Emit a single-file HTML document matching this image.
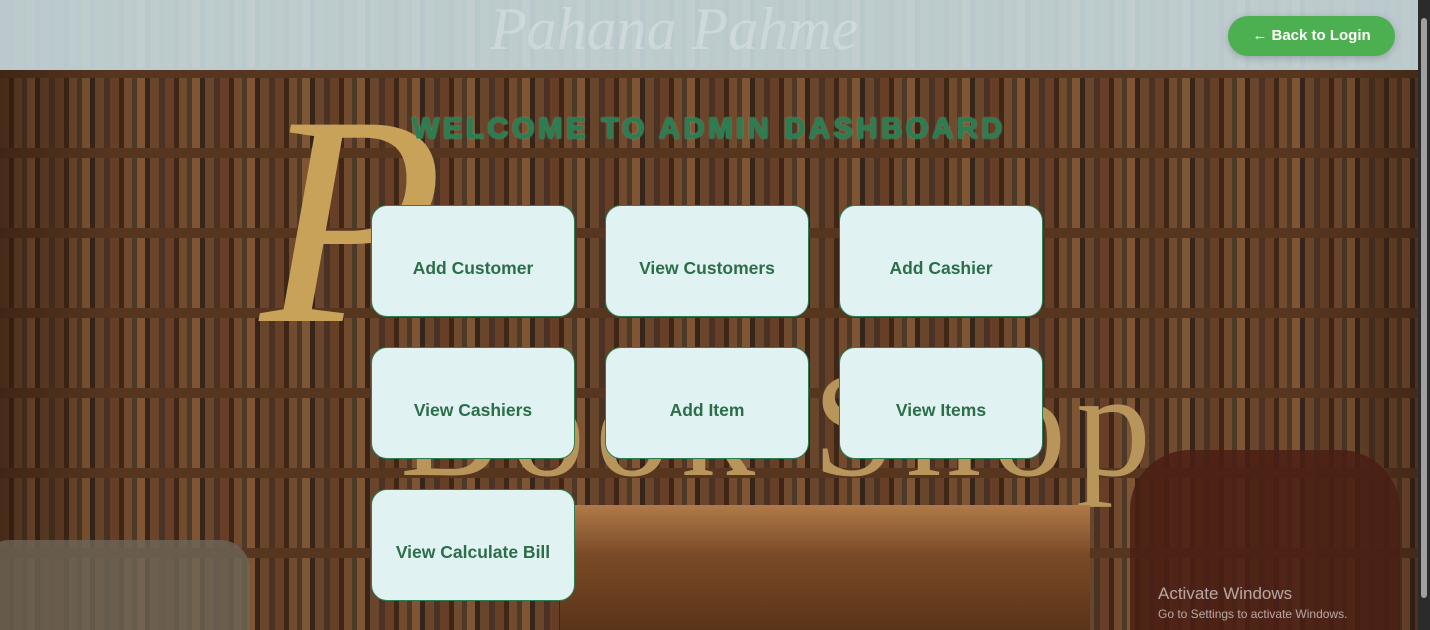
<!DOCTYPE html>
<html><head><meta charset="utf-8"><style>
html,body{margin:0;padding:0;width:1430px;height:630px;overflow:hidden;font-family:"Liberation Sans",sans-serif}
.bg{position:absolute;left:0;top:0;width:1418px;height:630px;background:#4a2e1c;overflow:hidden}
.books{position:absolute;left:0;right:0;top:0;bottom:0;
background:
repeating-linear-gradient(180deg,transparent 0 70px,#5a3820 70px 80px),
repeating-linear-gradient(90deg,#6b4328 0 9px,#3d2617 9px 14px,#7a5032 14px 22px,#4d3b2a 22px 27px,#8a5c38 27px 35px,#33241a 35px 40px,#6e4a2e 40px 49px,#4a3526 49px 55px);
background-position:0 -2px,0 0;opacity:.85}
.shade{position:absolute;left:0;right:0;top:0;bottom:0;background:linear-gradient(90deg,rgba(40,22,12,.5) 0,rgba(0,0,0,0) 8%,rgba(0,0,0,0) 92%,rgba(40,22,12,.4));}
.desk{position:absolute;left:560px;top:505px;width:530px;height:125px;background:linear-gradient(#b07a48,#7a4a28 40%,#5a3418)}
.chair{position:absolute;left:1130px;top:450px;width:270px;height:180px;background:#4a1e14;border-radius:60px 60px 0 0;opacity:.85}
.chairl{position:absolute;left:-20px;top:540px;width:270px;height:90px;background:#6e6658;border-radius:30px 30px 0 0;opacity:.8}
.script{position:absolute;font-family:"Liberation Serif",serif;font-style:italic;color:#c9a25a;font-size:300px;left:260px;top:70px;line-height:1}
.script2{position:absolute;font-family:"Liberation Serif",serif;color:#b8955a;font-size:150px;left:400px;top:350px;line-height:1;letter-spacing:10px}
.header{position:absolute;left:0;top:0;width:1418px;height:70px;background:rgba(200,218,224,.9)}
.ghost{position:absolute;left:490px;top:-5px;font-family:"Liberation Serif",serif;font-style:italic;font-size:60px;color:rgba(255,255,255,.25)}
.back{position:absolute;left:1228px;top:16px;width:167px;height:40px;border-radius:20px;background:#4caf50;color:#fff;font-weight:bold;font-size:15px;line-height:40px;text-align:center;box-shadow:0 2px 8px rgba(0,0,0,.2)}
.title{position:absolute;left:0;width:1418px;text-align:center;top:113px;font-size:29px;font-weight:900;letter-spacing:3.7px;color:#2e7d52;-webkit-text-stroke:1.2px #2e7d52;text-shadow:0 0 2px rgba(160,220,180,.8)}
.card{position:absolute;width:204px;height:112px;border:1.5px solid #2e7d52;border-radius:16px;background:#e0f2f1;color:#2c6e49;font-weight:bold;font-size:17.5px;display:flex;align-items:center;justify-content:center;box-sizing:border-box;padding-top:14px}
.sb{position:absolute;left:1418px;top:0;width:12px;height:630px;background:#2b2b2b}
.sb i{position:absolute;left:3px;top:18px;width:6px;height:580px;background:#a0a0a0;border-radius:3px}
.win{position:absolute;left:1158px;top:584px;color:rgba(255,255,255,.6);font-size:17px}
.win small{display:block;font-size:12px;margin-top:3px}
</style></head><body>
<div class="bg">
<div class="books"></div><div class="shade"></div>
<div class="script">P</div>
<div class="script2">Book Shop</div>
<div class="desk"></div><div class="chair"></div><div class="chairl"></div>
</div>
<div class="header"><div class="ghost">Pahana Pahme</div></div>
<div class="back">← Back to Login</div>
<div class="title">WELCOME TO ADMIN DASHBOARD</div>
<div class="card" style="left:371px;top:205px">Add Customer</div>
<div class="card" style="left:605px;top:205px">View Customers</div>
<div class="card" style="left:839px;top:205px">Add Cashier</div>
<div class="card" style="left:371px;top:347px">View Cashiers</div>
<div class="card" style="left:605px;top:347px">Add Item</div>
<div class="card" style="left:839px;top:347px">View Items</div>
<div class="card" style="left:371px;top:489px">View Calculate Bill</div>
<div class="win">Activate Windows<small>Go to Settings to activate Windows.</small></div>
<div class="sb"><i></i></div>
</body></html>
